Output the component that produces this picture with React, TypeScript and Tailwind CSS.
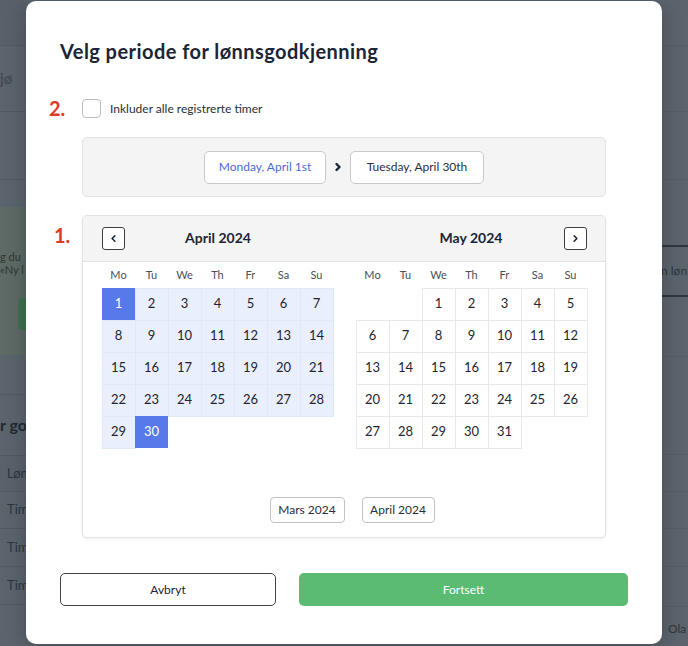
import React from 'react';

const font = "font-['Lato','Open_Sans',sans-serif]";

function Chevron({ dir, className }: { dir: 'left' | 'right'; className?: string }) {
  return (
    <svg viewBox="0 0 10 10" className={className} fill="none" stroke="currentColor" strokeLinecap="round" strokeLinejoin="round">
      {dir === 'left' ? <path d="M6.5 2 3.5 5l3 3" /> : <path d="M3.5 2l3 3-3 3" />}
    </svg>
  );
}

const weekdays = ['Mo', 'Tu', 'We', 'Th', 'Fr', 'Sa', 'Su'];

const gridLines =
  'shadow-[1px_0_0_0_#e8e8e8,0_1px_0_0_#e8e8e8,1px_1px_0_0_#e8e8e8,inset_1px_0_0_0_#e8e8e8,inset_0_1px_0_0_#e8e8e8]';
const rangeLines =
  'shadow-[1px_0_0_0_#e1e8f7,0_1px_0_0_#e1e8f7,1px_1px_0_0_#e1e8f7,inset_1px_0_0_0_#e1e8f7,inset_0_1px_0_0_#e1e8f7]';

function MonthGrid({ offset, days, range }: { offset: number; days: number; range?: [number, number] }) {
  const cells: (number | null)[] = [];
  for (let i = 0; i < offset; i++) cells.push(null);
  for (let d = 1; d <= days; d++) cells.push(d);

  return (
    <div className="w-[231px]">
      <div className="grid h-[26px] grid-cols-7 items-center text-center text-[11px] text-[#4a4f57]">
        {weekdays.map((w) => (
          <span key={w}>{w}</span>
        ))}
      </div>
      <div className="grid grid-cols-7">
        {cells.map((d, i) => {
          if (d === null) return <div key={i} className="h-[32px]" />;
          const edge = range && (d === range[0] || d === range[1]);
          return (
            <div
              key={i}
              className={`flex h-[32px] items-center justify-center text-[13px] ${
                edge
                  ? 'bg-[#5779ea] text-white'
                  : range
                    ? `bg-[#e9effd] text-[#1f2430] ${rangeLines}`
                    : `bg-white text-[#1f2430] ${gridLines}`
              }`}
            >
              {d}
            </div>
          );
        })}
      </div>
    </div>
  );
}

function BackgroundPage() {
  return (
    <div className="flex h-full w-full justify-between text-[13px] text-[#2e353d]">
      {/* left strip */}
      <div className="flex w-[26px] flex-col overflow-hidden whitespace-nowrap">
        <div className="h-[46px] shrink-0 border-b border-[#525a62] bg-[#58616a]" />
        <div className="flex h-[66px] shrink-0 items-center border-b border-[#525a62] text-[15px] font-bold text-[#454c54]">
          jø
        </div>
        <div className="h-[68px] shrink-0 border-b border-[#525a62]" />
        <div className="h-[27px] shrink-0" />
        <div className="flex h-[148px] shrink-0 flex-col bg-[#5d6a66] pt-[43px] text-[11px] leading-[13px] text-[#2f3834]">
          <span>g du</span>
          <span>«Ny l</span>
          <div className="ml-[18px] mt-[22px] h-[32px] w-[20px] rounded-l-[4px] bg-[#3e7250]" />
        </div>
        <div className="h-[40px] shrink-0 border-b border-[#525a62]" />
        <div className="flex h-[60px] shrink-0 items-center text-[16px] font-bold text-[#23292f]">r go</div>
        <div className="flex h-[37px] shrink-0 items-center border-y border-[#525a62] bg-[#59626b] pl-[7px]">Løn</div>
        <div className="flex h-[37px] shrink-0 items-center border-b border-[#525a62] pl-[7px]">Tim</div>
        <div className="flex h-[38px] shrink-0 items-center border-b border-[#525a62] pl-[7px]">Tim</div>
        <div className="flex h-[38px] shrink-0 items-center border-b border-[#525a62] pl-[7px]">Tim</div>
      </div>

      {/* right strip */}
      <div className="flex w-[26px] flex-col overflow-hidden whitespace-nowrap">
        <div className="h-[46px] shrink-0 border-b border-[#565f68]" />
        <div className="h-[66px] shrink-0 border-b border-[#565f68]" />
        <div className="h-[68px] shrink-0 border-b border-[#565f68]" />
        <div className="h-[67px] shrink-0 border-b-2 border-[#2f363d]" />
        <div className="flex h-[50px] shrink-0 items-center border-b-2 border-[#2f363d] text-[12px]">
          <span className="-ml-[1px]">n løn</span>
        </div>
        <div className="h-[60px] shrink-0 border-b border-[#565f68]" />
        <div className="h-[98px] shrink-0 border-b border-[#565f68]" />
        <div className="h-[37px] shrink-0 border-b border-[#565f68]" />
        <div className="h-[37px] shrink-0 border-b border-[#565f68]" />
        <div className="h-[38px] shrink-0 border-b border-[#565f68]" />
        <div className="h-[40px] shrink-0 border-b border-[#565f68]" />
        <div className="flex h-[44px] shrink-0 items-center pl-[6px] text-[12px]">Ola</div>
      </div>
    </div>
  );
}

export default function App() {
  return (
    <div className={`relative h-[646px] w-[688px] overflow-hidden bg-[#5b646d] ${font}`}>
      <BackgroundPage />

      {/* Modal */}
      <div className="absolute left-[26px] top-[1px] flex h-[643px] w-[636px] flex-col rounded-[10px] bg-white px-[34px] pt-[36px] shadow-[0_4px_20px_rgba(0,0,0,0.25)]">
        <h1 className="h-[28px] text-[20px] font-bold leading-[28px] tracking-[0.45px] text-[#1b2535]">
          Velg periode for lønnsgodkjenning
        </h1>

        <div className="mx-[22px] mt-[34px] flex flex-col">
          {/* Include all */}
          <div className="relative flex h-[19px] items-center gap-[9px]">
            <span className="absolute -left-[33px] top-[-1px] text-[20px] font-bold leading-[20px] text-[#e03a24]">2.</span>
            <span className="h-[19px] w-[19px] rounded-[4px] border border-[#b9bcc0] bg-white" />
            <span className="text-[12px] text-[#2a2f36]">Inkluder alle registrerte timer</span>
          </div>

          {/* Selected range */}
          <div className="mt-[19px] flex h-[60px] items-center justify-center gap-[7px] rounded-[5px] border border-[#e3e3e3] bg-[#f4f4f4]">
            <button className="h-[33px] w-[122px] rounded-[5px] border border-[#c9c9c9] bg-white text-[12px] text-[#4a6bd6]">
              Monday, April 1st
            </button>
            <Chevron dir="right" className="h-[16px] w-[10px] stroke-[2.4] text-[#1b2535]" />
            <button className="h-[33px] w-[134px] rounded-[5px] border border-[#c9c9c9] bg-white text-[12px] text-[#2a2f36]">
              Tuesday, April 30th
            </button>
          </div>

          {/* Calendar */}
          <div className="relative mt-[18px] flex h-[323px] flex-col rounded-[5px] border border-[#e3e3e3] bg-white shadow-[0_1px_3px_rgba(0,0,0,0.08)]">
            <span className="absolute -left-[29px] top-[9px] text-[20px] font-bold leading-[20px] text-[#e03a24]">1.</span>
            <div className="flex h-[46px] items-center justify-between rounded-t-[5px] border-b border-[#e3e3e3] bg-[#f4f4f4] pl-[19px] pr-[18px]">
              <div className="flex w-[232px] items-center">
                <button className="flex h-[23px] w-[23px] items-center justify-center rounded-[3px] border border-[#3a3f45] bg-white">
                  <Chevron dir="left" className="h-[9px] w-[9px] stroke-[1.8] text-[#1b2535]" />
                </button>
                <span className="flex-1 pb-[2px] text-center text-[14px] font-bold text-[#1b2535]">April 2024</span>
                <span className="w-[23px]" />
              </div>
              <div className="flex w-[232px] items-center">
                <span className="w-[23px]" />
                <span className="flex-1 pb-[2px] text-center text-[14px] font-bold text-[#1b2535]">May 2024</span>
                <button className="flex h-[23px] w-[23px] items-center justify-center rounded-[3px] border border-[#3a3f45] bg-white">
                  <Chevron dir="right" className="h-[9px] w-[9px] stroke-[1.8] text-[#1b2535]" />
                </button>
              </div>
            </div>

            <div className="flex gap-[23px] pl-[19px]">
              <MonthGrid offset={0} days={30} range={[1, 30]} />
              <MonthGrid offset={2} days={31} />
            </div>

            <div className="mt-[49px] flex justify-center gap-[17px] pl-[16px]">
              <button className="h-[26px] w-[75px] rounded-[4px] border border-[#bfc2c6] text-[12px] text-[#2a2f36]">
                Mars 2024
              </button>
              <button className="h-[26px] w-[73px] rounded-[4px] border border-[#bfc2c6] text-[12px] text-[#2a2f36]">
                April 2024
              </button>
            </div>
          </div>
        </div>

        {/* Footer */}
        <div className="mt-[35px] flex gap-[23px]">
          <button className="h-[33px] w-[216px] rounded-[5px] border border-[#3f444a] bg-white text-[12px] text-[#1f2430]">
            Avbryt
          </button>
          <button className="h-[33px] flex-1 rounded-[5px] bg-[#5cbb72] text-[12px] text-white">Fortsett</button>
        </div>
      </div>
    </div>
  );
}
